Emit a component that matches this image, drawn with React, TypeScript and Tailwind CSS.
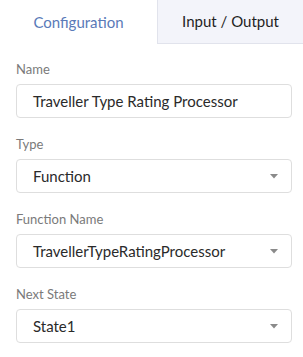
import React from "react";

const Caret = () => (
  <svg width="8" height="5" viewBox="0 0 8 5" className="shrink-0">
    <path d="M0 0 L8 0 L4 4.5 Z" fill="#8a8a8a" />
  </svg>
);

const Field = ({ label, value, select }: { label: string; value: string; select?: boolean }) => (
  <div className="flex flex-col">
    <div className="text-[13px] leading-[16px] text-[#7a7a7a] mb-[7px]">{label}</div>
    <div className="h-[34px] border border-[#dedede] rounded-[4px] bg-white flex items-center pl-[16px] pr-[13px]">
      <span className="flex-1 text-[15px] text-[#2a2a2a] whitespace-nowrap">{value}</span>
      {select && <Caret />}
    </div>
  </div>
);

export default function App() {
  return (
    <div className="w-[303px] h-[357px] bg-white" style={{ fontFamily: "Lato, 'Open Sans', sans-serif" }}>
      <div className="flex h-[44px]">
        <div className="w-[157px] flex items-center justify-center text-[15px] text-[#5a7ab8]">Configuration</div>
        <div className="flex-1 flex items-center justify-center text-[15px] text-[#1f1f1f] bg-[#f3f4fa] border-l border-b border-[#e1e3ec]">
          Input / Output
        </div>
      </div>
      <div className="flex flex-col gap-[18px] pl-[16px] pr-[11px] pt-[17px]">
        <Field label="Name" value="Traveller Type Rating Processor" />
        <Field label="Type" value="Function" select />
        <Field label="Function Name" value="TravellerTypeRatingProcessor" select />
        <Field label="Next State" value="State1" select />
      </div>
    </div>
  );
}
